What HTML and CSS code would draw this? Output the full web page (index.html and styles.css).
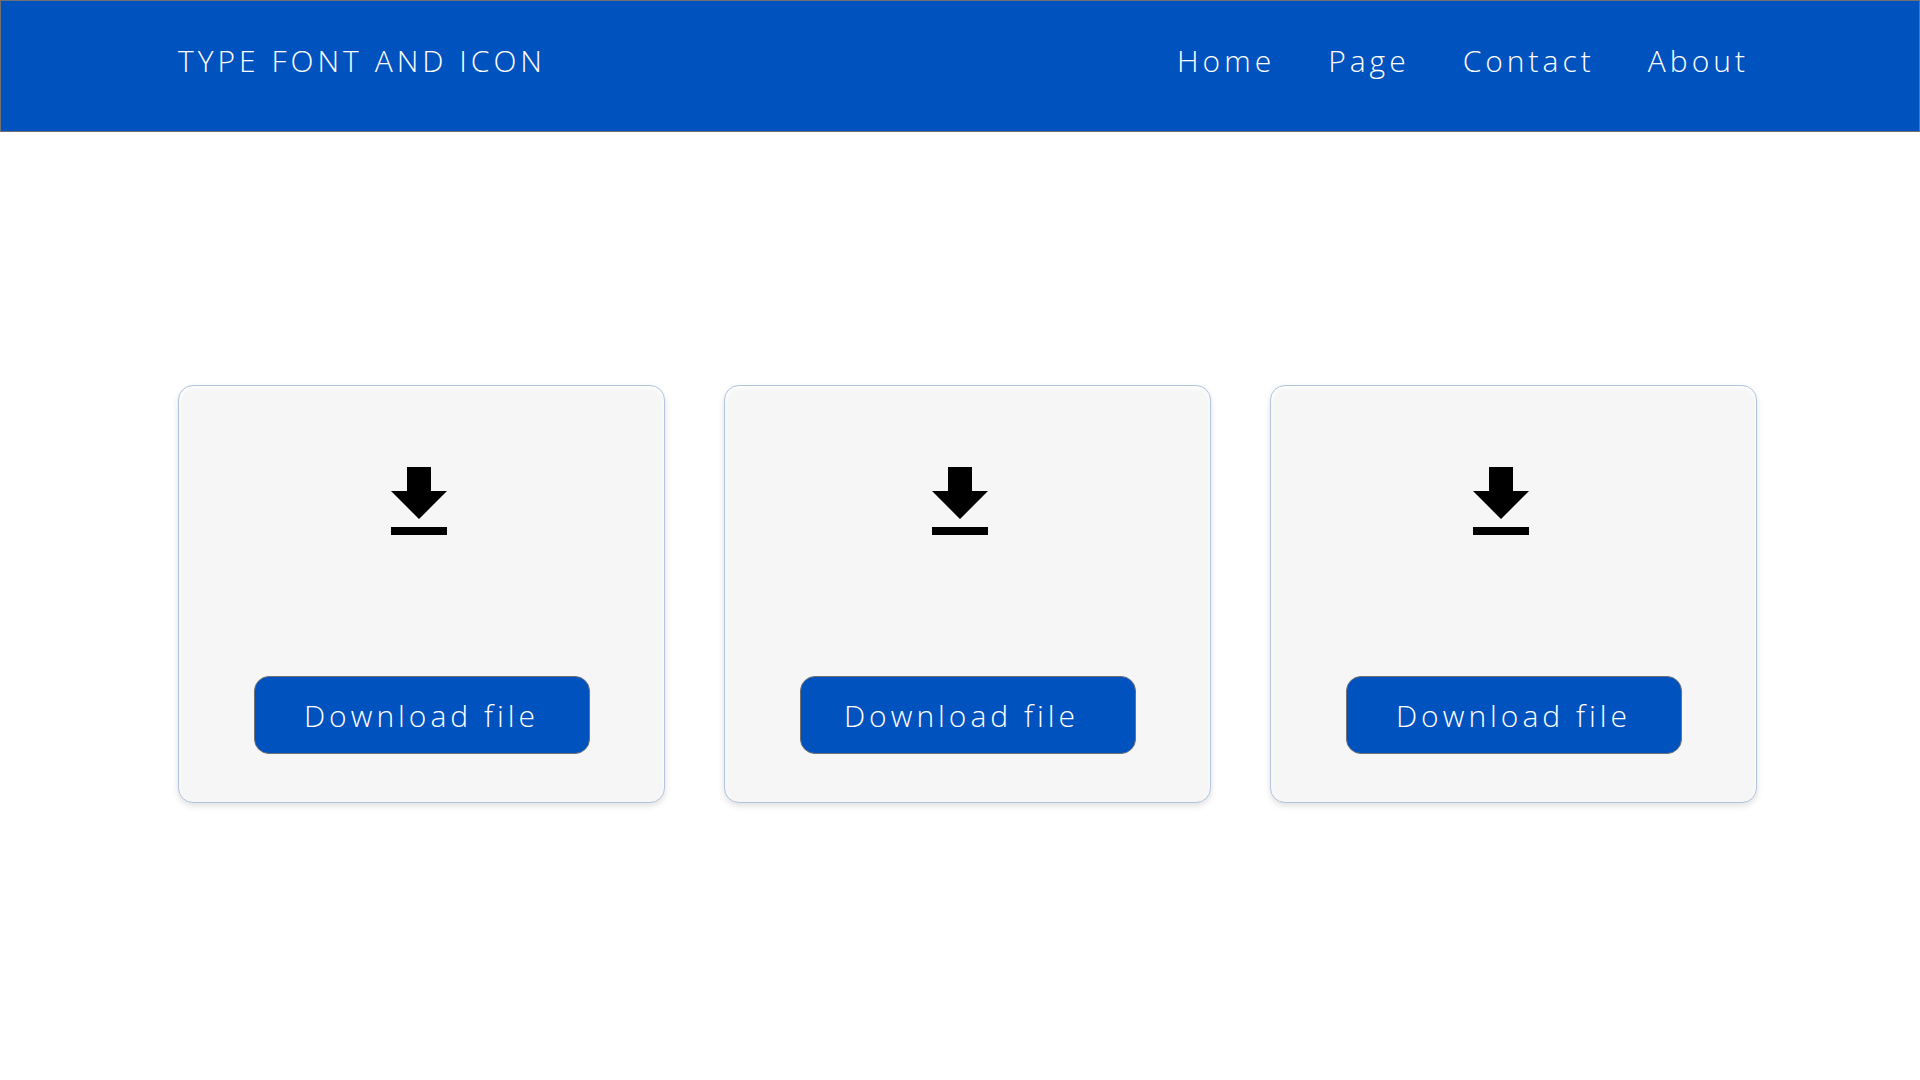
FILE: index.html
```html
<!DOCTYPE html>
<html lang="en">
<head>
<meta charset="utf-8">
<meta name="viewport" content="width=device-width, initial-scale=1">
<title>Type font and icon</title>
<link rel="stylesheet" href="styles.css">
</head>
<body>
<header class="site-header">
  <a class="brand" href="#">TYPE FONT AND ICON</a>
  <nav class="site-nav">
    <a href="#">Home</a>
    <a href="#">Page</a>
    <a href="#">Contact</a>
    <a href="#">About</a>
  </nav>
</header>
<main class="cards">
  <article class="card card-first">
    <svg class="icon" viewBox="0 0 24 24" aria-hidden="true"><path d="M19 9h-4V3H9v6H5l7 7 7-7zM5 18v2h14v-2H5z"/></svg>
    <button class="download" type="button">Download file</button>
  </article>
  <article class="card card-second">
    <svg class="icon" viewBox="0 0 24 24" aria-hidden="true"><path d="M19 9h-4V3H9v6H5l7 7 7-7zM5 18v2h14v-2H5z"/></svg>
    <button class="download" type="button">Download file</button>
  </article>
  <article class="card card-third">
    <svg class="icon" viewBox="0 0 24 24" aria-hidden="true"><path d="M19 9h-4V3H9v6H5l7 7 7-7zM5 18v2h14v-2H5z"/></svg>
    <button class="download" type="button">Download file</button>
  </article>
</main>
</body>
</html>
```
FILE: styles.css
```css
* {
  box-sizing: border-box;
}

body {
  margin: 0;
  background: #fff;
  color: #000;
  font-family: "Open Sans", "Noto Sans", sans-serif;
  font-size: 30px;
  font-weight: 300;
  line-height: 40px;
  letter-spacing: 4px;
}

.site-header {
  display: flex;
  justify-content: space-between;
  padding: 40px 170px 50px 177px;
  border: 1px solid #707070;
  background: #0052bf;
}

.site-header a {
  color: #fff;
  text-decoration: none;
}

.site-nav {
  display: flex;
  gap: 53px;
}

.cards {
  display: grid;
  grid-template-columns: repeat(3, 1fr);
  gap: 59px;
  padding: 253px 163px 60px 178px;
}

.card {
  display: flex;
  flex-direction: column;
  align-items: center;
  gap: 125px;
  padding: 69px 16px 48px;
  border: 1px solid #b0c4de;
  border-radius: 15px;
  background: #f6f6f6;
  box-shadow: 0 3px 6px rgba(0, 0, 0, 0.12), inset 0 2px 4px #fff;
}

.icon {
  width: 96px;
  height: 96px;
}

.card-first .icon {
  margin-right: 6px;
}

.card-second .icon {
  margin-right: 16px;
}

.card-third .icon {
  margin-right: 26px;
}

.download {
  width: 336px;
  max-width: 100%;
  height: 78px;
  padding: 2px 0 0;
  border: 1px solid #707070;
  border-radius: 15px;
  background: #0052bf;
  color: #fff;
  font: inherit;
  letter-spacing: inherit;
}

.card-second .download {
  padding-right: 12px;
}
```
